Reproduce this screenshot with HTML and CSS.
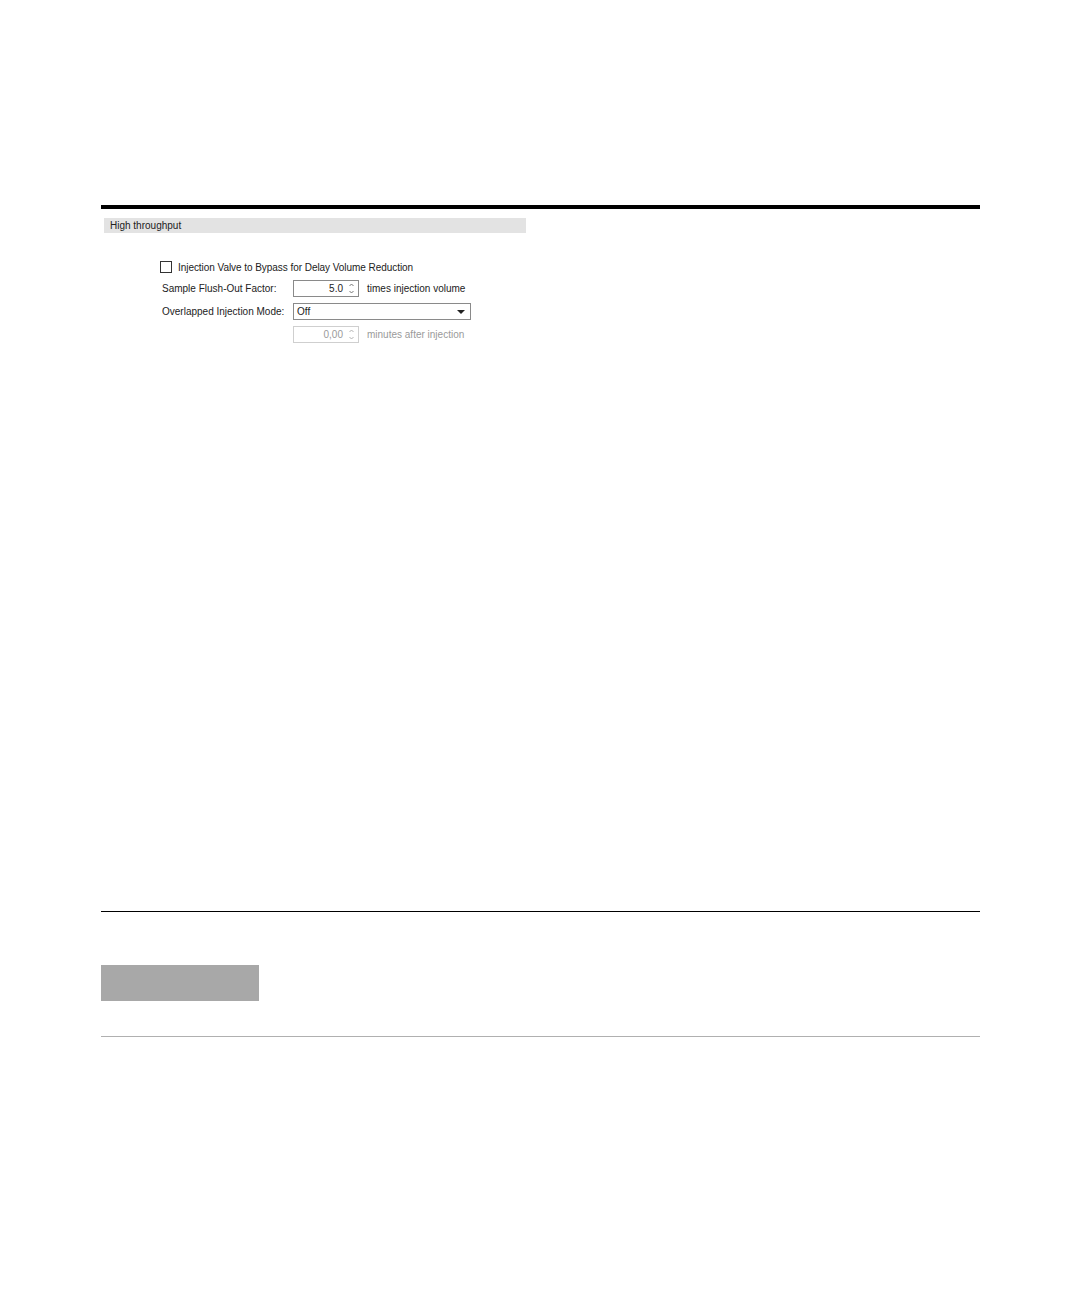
FILE: index.html
```html
<!DOCTYPE html>
<html>
<head>
<meta charset="utf-8">
<link rel="stylesheet" href="styles.css">
</head>
<body>
<div class="page">
  <div class="rule-top"></div>
  <div class="panel">
    <div class="panel-head">High throughput</div>
    <div class="form">
      <label class="check-row"><span class="checkbox"></span><span>Injection Valve to Bypass for Delay Volume Reduction</span></label>
      <div class="row">
        <span class="label">Sample Flush-Out Factor:</span>
        <span class="spin"><span class="val">5.0</span><svg class="arrows" width="5" height="11" viewBox="0 0 5 11"><path d="M0.5 3 L2.5 1 L4.5 3" fill="none" stroke="currentColor" stroke-width="0.9"/><path d="M0.5 8 L2.5 10 L4.5 8" fill="none" stroke="currentColor" stroke-width="0.9"/></svg></span>
        <span class="unit">times injection volume</span>
      </div>
      <div class="row">
        <span class="label">Overlapped Injection Mode:</span>
        <span class="select"><span>Off</span><span class="caret"></span></span>
      </div>
      <div class="row disabled">
        <span class="label"></span>
        <span class="spin"><span class="val">0,00</span><svg class="arrows" width="5" height="11" viewBox="0 0 5 11"><path d="M0.5 3 L2.5 1 L4.5 3" fill="none" stroke="currentColor" stroke-width="0.9"/><path d="M0.5 8 L2.5 10 L4.5 8" fill="none" stroke="currentColor" stroke-width="0.9"/></svg></span>
        <span class="unit">minutes after injection</span>
      </div>
    </div>
  </div>
  <div class="rule-mid"></div>
  <div class="gray-box"></div>
  <div class="rule-bottom"></div>
</div>
</body>
</html>
```
FILE: styles.css
```css
html, body { margin: 0; padding: 0; background: #fff; }
body { font-family: "Liberation Sans", Arial, sans-serif; color: #222; }
.page { width: 879px; padding: 205px 0 0 101px; }
.rule-top { height: 4px; background: #000; }
.panel { padding: 9px 0 0 3px; height: 693px; }
.panel-head { width: 416px; height: 15px; background: #e3e3e3; font-size: 10px; line-height: 15px; padding-left: 6px; color: #222; }
.form { padding: 28px 0 0 56px; display: flex; flex-direction: column; }
.check-row { display: flex; align-items: center; gap: 6px; font-size: 10px; letter-spacing: -0.05px; height: 12px; padding-bottom: 7px; }
.checkbox { width: 10px; height: 10px; border: 1px solid #333; background: #fff; }
.row { display: flex; align-items: center; height: 17px; margin-bottom: 6px; font-size: 10px; padding-left: 2px; }
.label { width: 131px; }
.spin { width: 64px; height: 15px; border: 1px solid #8a8a8a; display: flex; align-items: center; justify-content: flex-end; box-sizing: content-box; }
.spin .val { padding-right: 6px; }
.spin .arrows { color: #666; margin-right: 4px; }
.unit { margin-left: 8px; }
.select { width: 173px; height: 15px; border: 1px solid #8a8a8a; display: flex; align-items: center; justify-content: space-between; padding-left: 3px; }
.caret { width: 0; height: 0; border-left: 4px solid transparent; border-right: 4px solid transparent; border-top: 4px solid #222; margin-right: 5px; }
.disabled { color: #9a9a9a; }
.disabled .spin { border-color: #cfcfcf; }
.disabled .spin .arrows { color: #aaa; }
.rule-mid { height: 1px; background: #000; }
.gray-box { width: 158px; height: 36px; background: #a8a8a8; margin-top: 53px; }
.rule-bottom { height: 1px; background: #b0b0b0; margin-top: 35px; }
```
